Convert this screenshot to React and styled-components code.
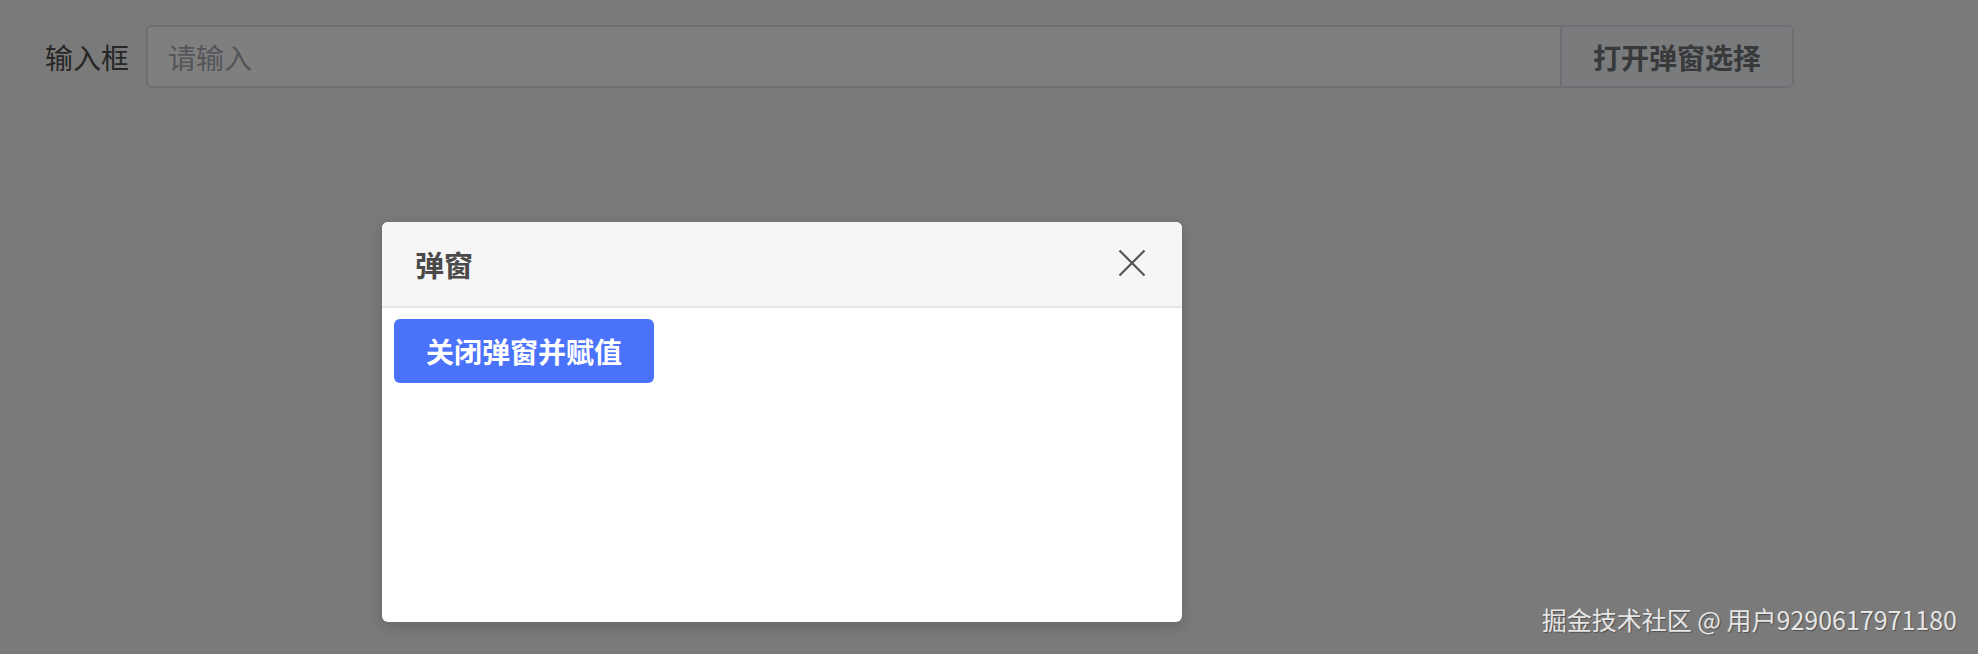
import React, { useState } from "react";
import styled, { createGlobalStyle } from "styled-components";

const GlobalStyle = createGlobalStyle`
  html, body {
    margin: 0;
    padding: 0;
    background: #f4f4f4;
    font-family: "Noto Sans CJK SC", "Noto Sans", sans-serif;
  }
  * { box-sizing: border-box; }
`;

const Page = styled.div`
  width: 1978px;
  height: 654px;
  position: relative;
  overflow: hidden;
`;

const FormRow = styled.div`
  display: flex;
  align-items: center;
  padding: 25px 0 0 45px;
  width: 1794px;
`;

const Label = styled.label`
  font-size: 28px;
  color: #4d4d4d;
  margin-right: 17px;
  line-height: 1;
`;

const InputGroup = styled.div`
  flex: 1;
  display: flex;
  height: 63px;
  border: 2px solid #dcdfe6;
  border-radius: 6px;
  overflow: hidden;
  background: #fff;
`;

const TextInput = styled.input`
  flex: 1;
  border: none;
  outline: none;
  padding: 0 20px;
  font-family: inherit;
  font-size: 28px;
  color: #606266;
  background: transparent;

  &::placeholder {
    color: #a8abb2;
  }
`;

const AppendButton = styled.button`
  width: 232px;
  border: none;
  border-left: 2px solid #dcdfe6;
  background: #f5f7fa;
  color: #707276;
  font-family: inherit;
  font-size: 28px;
  font-weight: 700;
  cursor: pointer;
`;

const Overlay = styled.div`
  position: absolute;
  inset: 0;
  background: rgba(0, 0, 0, 0.5);
  display: flex;
  align-items: flex-start;
  padding: 222px 0 0 382px;
`;

const Modal = styled.div`
  width: 800px;
  height: 400px;
  background: #fff;
  border-radius: 6px;
  overflow: hidden;
  box-shadow: 0 4px 14px rgba(0, 0, 0, 0.18);
  display: flex;
  flex-direction: column;
`;

const ModalHeader = styled.div`
  height: 86px;
  background: #f6f6f6;
  border-bottom: 2px solid #e6e6e6;
  display: flex;
  align-items: center;
  justify-content: space-between;
  padding: 0 36px 0 33px;
`;

const ModalTitle = styled.div`
  font-size: 29px;
  font-weight: 700;
  color: #4a4a4a;
  line-height: 1;
`;

const CloseButton = styled.button`
  border: none;
  background: transparent;
  padding: 0;
  width: 28px;
  height: 28px;
  display: flex;
  cursor: pointer;
  margin-top: -2px;
`;

const ModalBody = styled.div`
  flex: 1;
  padding: 11px 12px;
`;

const PrimaryButton = styled.button`
  width: 260px;
  height: 64px;
  border: none;
  border-radius: 6px;
  background: #4a72fb;
  color: #fff;
  font-family: inherit;
  font-size: 28px;
  font-weight: 700;
  cursor: pointer;
`;

const Watermark = styled.div`
  position: absolute;
  right: 21px;
  bottom: 22px;
  font-size: 25px;
  color: #e6e6e6;
  text-shadow: 1px 1px 1px rgba(0, 0, 0, 0.35);
  line-height: 1;
`;

export default function App() {
  const [value, setValue] = useState("");
  const [open, setOpen] = useState(true);

  return (
    <Page>
      <GlobalStyle />
      <FormRow>
        <Label>输入框</Label>
        <InputGroup>
          <TextInput
            placeholder="请输入"
            value={value}
            onChange={(e) => setValue(e.target.value)}
          />
          <AppendButton onClick={() => setOpen(true)}>打开弹窗选择</AppendButton>
        </InputGroup>
      </FormRow>

      {open && (
        <Overlay>
          <Modal>
            <ModalHeader>
              <ModalTitle>弹窗</ModalTitle>
              <CloseButton onClick={() => setOpen(false)}>
                <svg width="28" height="28" viewBox="0 0 28 28">
                  <path d="M1.5 1.5L26.5 26.5M26.5 1.5L1.5 26.5" stroke="#555" strokeWidth="2.2" />
                </svg>
              </CloseButton>
            </ModalHeader>
            <ModalBody>
              <PrimaryButton
                onClick={() => {
                  setValue("已选择");
                  setOpen(false);
                }}
              >
                关闭弹窗并赋值
              </PrimaryButton>
            </ModalBody>
          </Modal>
        </Overlay>
      )}

      <Watermark>掘金技术社区 @ 用户9290617971180</Watermark>
    </Page>
  );
}
